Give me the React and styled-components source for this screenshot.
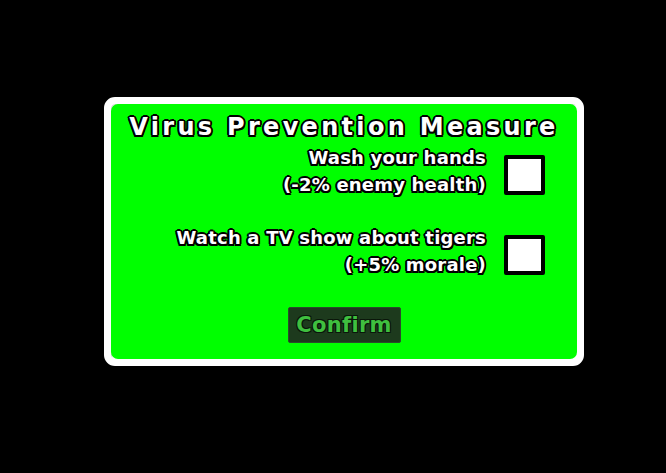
import React from 'react'
import styled, { createGlobalStyle } from 'styled-components'

const GlobalStyle = createGlobalStyle`
  html, body {
    margin: 0;
    padding: 0;
    background: #000;
  }
  body {
    width: 666px;
    height: 473px;
    overflow: hidden;
    font-family: "DejaVu Sans", "Liberation Sans", sans-serif;
  }
`

const outline = `
  text-shadow:
    -1.5px -1.5px 0 #000, 1.5px -1.5px 0 #000,
    -1.5px 1.5px 0 #000, 1.5px 1.5px 0 #000,
    0 -2px 0 #000, 0 2px 0 #000,
    -2px 0 0 #000, 2px 0 0 #000;
`

const Screen = styled.div`
  padding: 97px 0 0 104px;
`

const Frame = styled.div`
  width: 466px;
  border: 7px solid #fff;
  border-radius: 11px;
  background: #fff;
  box-shadow: inset 1px 1px 0 #ddd;
`

const Panel = styled.div`
  background: #00ff00;
  border-radius: 7px;
  padding: 9px 32px 16px 0;
  display: flex;
  flex-direction: column;
`

const Title = styled.h1`
  margin: 0 -32px 3px 0;
  font-size: 24px;
  line-height: 28px;
  font-weight: bold;
  letter-spacing: 3.3px;
  color: #fff;
  text-align: center;
  white-space: nowrap;
  ${outline}
`

const Measures = styled.div`
  display: flex;
  flex-direction: column;
  gap: 26px;
`

const Measure = styled.label`
  display: flex;
  justify-content: flex-end;
  align-items: flex-start;
  gap: 18px;
`

const Caption = styled.div`
  font-size: 18px;
  line-height: 27px;
  font-weight: bold;
  letter-spacing: 0.2px;
  color: #fff;
  text-align: right;
  white-space: nowrap;
  ${outline}
`

const Box = styled.span`
  margin-top: 11px;
  width: 33px;
  height: 32px;
  border: 4px solid #000;
  border-radius: 2px;
  background: #fff;
`

const Footer = styled.div`
  display: flex;
  justify-content: center;
  padding-left: 32px;
  margin-top: 29px;
`

const ConfirmButton = styled.button`
  width: 113px;
  height: 36px;
  padding: 0;
  border: 1px solid #2c4a2c;
  border-radius: 2px;
  background: #1d3a1d;
  color: #3fbf3f;
  font-family: inherit;
  font-size: 21px;
  font-weight: bold;
  letter-spacing: 0.3px;
  text-shadow: 1px 1px 0 #0a160a, -1px -1px 0 #0a160a, 1px -1px 0 #0a160a, -1px 1px 0 #0a160a;
  cursor: pointer;
`

const measures = [
  { id: 'hands', lines: ['Wash your hands', '(-2% enemy health)'] },
  { id: 'tigers', lines: ['Watch a TV show about tigers', '(+5% morale)'] },
]

export default function App() {
  return (
    <>
      <GlobalStyle />
      <Screen>
        <Frame>
          <Panel>
            <Title>Virus Prevention Measure</Title>
            <Measures>
              {measures.map(m => (
                <Measure key={m.id}>
                  <Caption>
                    {m.lines.map(line => <div key={line}>{line}</div>)}
                  </Caption>
                  <Box />
                </Measure>
              ))}
            </Measures>
            <Footer>
              <ConfirmButton>Confirm</ConfirmButton>
            </Footer>
          </Panel>
        </Frame>
      </Screen>
    </>
  )
}
